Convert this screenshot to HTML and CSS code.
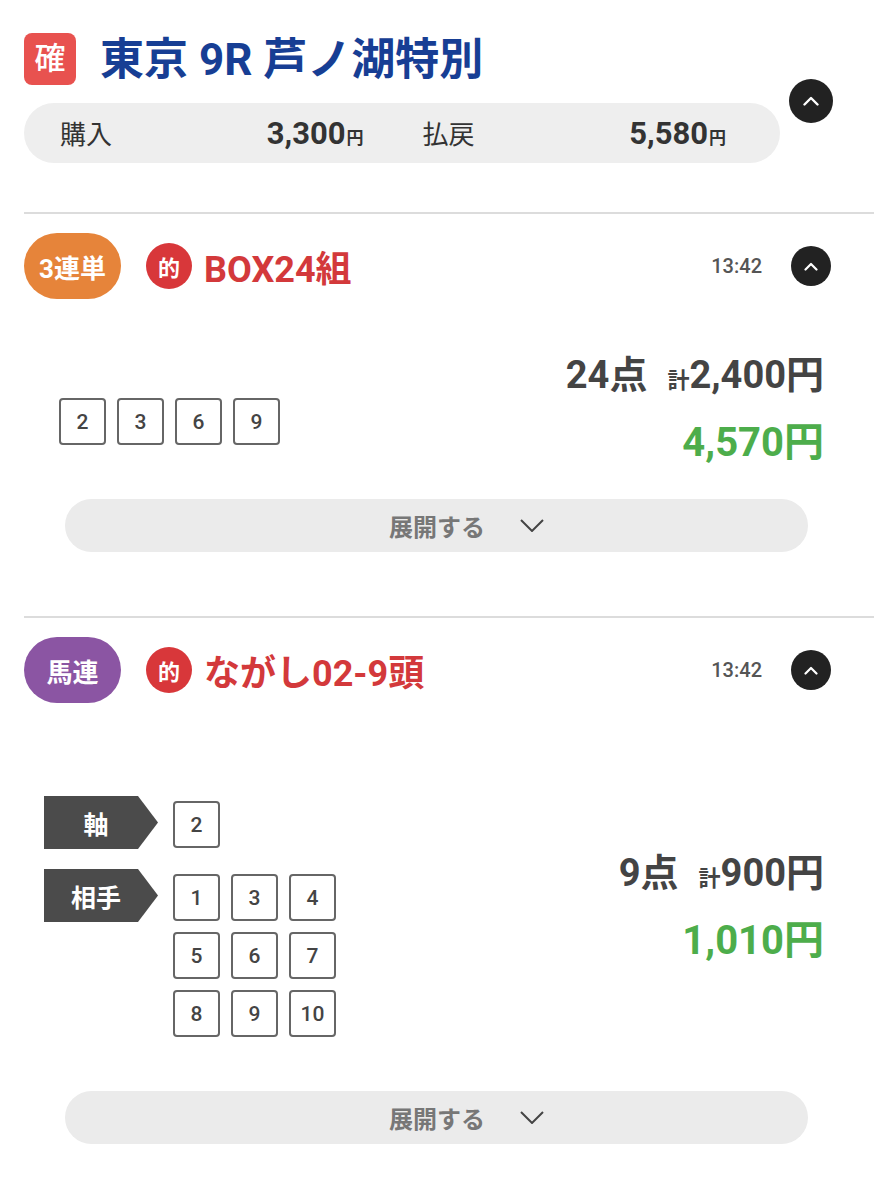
FILE: index.html
```html
<!DOCTYPE html>
<html lang="ja">
<head>
<meta charset="utf-8">
<title>東京 9R 芦ノ湖特別</title>
<link rel="stylesheet" href="styles.css">
</head>
<body>
<div class="page">
  <header class="race">
    <div class="race-main">
      <div class="race-title-row">
        <span class="kaku">確</span>
        <h1 class="race-title">東京 9R 芦ノ湖特別</h1>
      </div>
      <div class="summary">
        <div class="sum-col"><span class="sum-label">購入</span><span class="sum-val">3,300<small>円</small></span></div>
        <div class="sum-col"><span class="sum-label">払戻</span><span class="sum-val">5,580<small>円</small></span></div>
      </div>
    </div>
    <button class="toggle toggle-lg" aria-label="閉じる">
      <svg width="16" height="10" viewBox="0 0 16 10"><path d="M1.5 8.5 L8 2 L14.5 8.5" fill="none" stroke="#fff" stroke-width="2.4" stroke-linecap="round" stroke-linejoin="round"/></svg>
    </button>
  </header>

  <section class="bet">
    <div class="bet-head">
      <span class="kind kind-orange">3連単</span>
      <span class="teki">的</span>
      <span class="bet-title">BOX24組</span>
      <span class="spacer"></span>
      <span class="time">13:42</span>
      <button class="toggle" aria-label="閉じる">
        <svg width="14" height="9" viewBox="0 0 14 9"><path d="M1.5 7.5 L7 2 L12.5 7.5" fill="none" stroke="#fff" stroke-width="2.2" stroke-linecap="round" stroke-linejoin="round"/></svg>
      </button>
    </div>
    <div class="bet-body body-box">
      <div class="nums nums-box">
        <span class="num">2</span><span class="num">3</span><span class="num">6</span><span class="num">9</span>
      </div>
      <div class="amounts amounts-box">
        <div class="amt-line"><span class="pts">24点</span><span class="total"><small>計</small>2,400円</span></div>
        <div class="amt-line win">4,570円</div>
      </div>
    </div>
    <button class="expand">展開する
      <svg width="24" height="13" viewBox="0 0 24 13"><path d="M1 1 L12 12 L23 1" fill="none" stroke="#444" stroke-width="2"/></svg>
    </button>
  </section>

  <section class="bet">
    <div class="bet-head">
      <span class="kind kind-purple">馬連</span>
      <span class="teki">的</span>
      <span class="bet-title">ながし02-9頭</span>
      <span class="spacer"></span>
      <span class="time">13:42</span>
      <button class="toggle" aria-label="閉じる">
        <svg width="14" height="9" viewBox="0 0 14 9"><path d="M1.5 7.5 L7 2 L12.5 7.5" fill="none" stroke="#fff" stroke-width="2.2" stroke-linecap="round" stroke-linejoin="round"/></svg>
      </button>
    </div>
    <div class="bet-body body-nagashi">
      <div class="nagashi">
        <div class="ng-row">
          <span class="ng-label">軸</span>
          <div class="ng-grid"><span class="num">2</span></div>
        </div>
        <div class="ng-row">
          <span class="ng-label">相手</span>
          <div class="ng-grid">
            <span class="num">1</span><span class="num">3</span><span class="num">4</span>
            <span class="num">5</span><span class="num">6</span><span class="num">7</span>
            <span class="num">8</span><span class="num">9</span><span class="num">10</span>
          </div>
        </div>
      </div>
      <div class="amounts amounts-nagashi">
        <div class="amt-line"><span class="pts">9点</span><span class="total"><small>計</small>900円</span></div>
        <div class="amt-line win">1,010円</div>
      </div>
    </div>
    <button class="expand expand-2">展開する
      <svg width="24" height="13" viewBox="0 0 24 13"><path d="M1 1 L12 12 L23 1" fill="none" stroke="#444" stroke-width="2"/></svg>
    </button>
  </section>
</div>
</body>
</html>
```

FILE: styles.css
```css
* { box-sizing: border-box; }
html, body { margin: 0; padding: 0; background: #fff; }
body {
  font-family: Roboto, "Noto Sans CJK JP", sans-serif;
  color: #444;
  width: 874px;
}
button { font-family: inherit; border: 0; padding: 0; cursor: pointer; }

.race {
  display: flex;
  padding: 33px 0 0 24px;
}
.race-main { width: 756px; }
.race-title-row {
  display: flex;
  align-items: center;
  height: 52px;
}
.kaku {
  width: 52px;
  height: 52px;
  border-radius: 8px;
  background: #e8524f;
  color: #fff;
  font-size: 31px;
  line-height: 52px;
  text-align: center;
  font-weight: 500;
}
.race-title {
  margin: 2px 0 0 24px;
  font-size: 44px;
  line-height: 52px;
  font-weight: 700;
  color: #173e94;
  letter-spacing: 0;
}
.summary {
  margin-top: 18px;
  height: 60px;
  border-radius: 30px;
  background: #eeeeee;
  display: grid;
  grid-template-columns: 1fr 1fr;
  column-gap: 59px;
  align-items: center;
  padding: 0 54px 0 36px;
}
.sum-col {
  display: flex;
  justify-content: space-between;
  align-items: baseline;
}
.sum-label { font-size: 26px; color: #333; }
.sum-val { font-size: 31px; font-weight: 700; color: #333; }
.sum-val small { font-size: 17px; font-weight: 700; margin-left: 1px; }

.toggle {
  width: 40px;
  height: 40px;
  border-radius: 50%;
  background: #222;
  display: flex;
  align-items: center;
  justify-content: center;
  flex: none;
}
.toggle-lg {
  width: 44px;
  height: 44px;
  margin: 46px 0 0 9px;
}

.bet {
  margin-left: 24px;
  border-top: 2px solid #dcdcdc;
  margin-top: 49px;
  padding-top: 19px;
}
.bet + .bet { margin-top: 64px; }
.bet-head {
  display: flex;
  align-items: center;
  height: 66px;
  padding-right: 43px;
}
.kind {
  width: 97px;
  height: 66px;
  border-radius: 33px;
  color: #fff;
  font-size: 26px;
  font-weight: 700;
  display: flex;
  align-items: center;
  justify-content: center;
}
.kind-orange { background: #e6843a; }
.kind-purple { background: #8b55a3; }
.teki {
  margin-left: 25px;
  width: 46px;
  height: 46px;
  border-radius: 50%;
  background: #d8373a;
  color: #fff;
  font-size: 22px;
  font-weight: 700;
  display: flex;
  align-items: center;
  justify-content: center;
}
.bet-title {
  margin-left: 12px;
  font-size: 36px;
  font-weight: 700;
  color: #d3393b;
}
.spacer { flex: 1; }
.time { font-size: 20px; font-weight: 500; color: #555; margin-right: 29px; }

.bet-body {
  display: flex;
  justify-content: space-between;
  align-items: flex-start;
  padding-right: 50px;
}
.body-box { padding-top: 42px; padding-left: 35px; }
.body-nagashi { padding-top: 93px; padding-left: 20px; }

.nums { display: flex; gap: 11px; }
.nums-box { margin-top: 57px; }
.num {
  width: 47px;
  height: 47px;
  border: 2px solid #666;
  border-radius: 4px;
  display: flex;
  align-items: center;
  justify-content: center;
  font-size: 21px;
  font-weight: 500;
  color: #444;
  background: #fff;
}

.amounts { text-align: right; }
.amounts-nagashi { margin-top: 43px; }
.amt-line {
  height: 68px;
  line-height: 68px;
  font-size: 38px;
  font-weight: 700;
  color: #444;
  white-space: nowrap;
}
.total { margin-left: 20px; }
.total small { font-size: 22px; font-weight: 700; }
.amt-line.win { color: #4dad4b; font-size: 40px; }

.nagashi { display: flex; flex-direction: column; gap: 20px; }
.ng-row { display: flex; align-items: flex-start; }
.ng-label {
  width: 114px;
  height: 53px;
  background: #4b4b4b;
  color: #fff;
  font-size: 25px;
  font-weight: 700;
  display: flex;
  align-items: center;
  justify-content: center;
  padding-right: 10px;
  clip-path: polygon(0 0, 94px 0, 114px 50%, 94px 100%, 0 100%);
}
.ng-grid {
  margin: 5px 0 0 15px;
  display: grid;
  grid-template-columns: repeat(3, 47px);
  gap: 11px;
}

.expand {
  display: flex;
  align-items: center;
  justify-content: center;
  gap: 35px;
  margin: 22px 0 0 41px;
  width: 743px;
  height: 53px;
  border-radius: 27px;
  background: #ebebeb;
  color: #777;
  font-size: 24px;
  font-weight: 700;
  padding-left: 60px;
}
.expand-2 { margin-top: 54px; }
```
